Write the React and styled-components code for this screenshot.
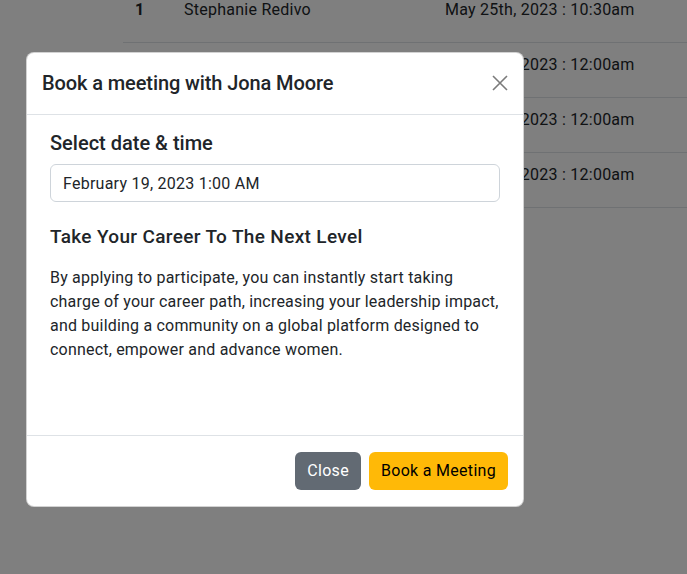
import React from "react";
import styled, { createGlobalStyle } from "styled-components";

const Global = createGlobalStyle`
  html, body { margin: 0; padding: 0; background: #fff; }
  body {
    font-family: Roboto, "Noto Sans", "Liberation Sans", sans-serif;
    color: #212529;
    font-size: 16px;
    line-height: 1.5;
    letter-spacing: 0.25px;
    -webkit-font-smoothing: antialiased;
  }
  * { box-sizing: border-box; }
`;

const Page = styled.div`
  width: 687px;
  height: 574px;
  overflow: hidden;
  position: relative;
`;

const Table = styled.div`
  margin: -12px 0 0 123px;
  display: flex;
  flex-direction: column;
`;

const Row = styled.div`
  display: grid;
  grid-template-columns: 49px 261px 1fr;
  height: 55px;
  border-bottom: 1px solid #dee2e6;
`;

const Cell = styled.div`
  padding: 10px 12px;
  white-space: nowrap;
  font-weight: ${(p) => (p.$bold ? 700 : 400)};
`;

const Backdrop = styled.div`
  position: absolute;
  inset: 0;
  background: rgba(0, 0, 0, 0.5);
  padding: 52px 0 0 26px;
`;

const Modal = styled.div`
  width: 498px;
  background: #fff;
  border: 1px solid rgba(0, 0, 0, 0.175);
  border-radius: 8px;
  display: flex;
  flex-direction: column;
  overflow: hidden;
`;

const Header = styled.div`
  display: flex;
  align-items: center;
  justify-content: space-between;
  padding: 15px 15px 16px 15px;
  border-bottom: 1px solid #dee2e6;
`;

const Title = styled.h5`
  margin: 0;
  font-size: 20px;
  font-weight: 500;
  line-height: 30px;
  letter-spacing: -0.1px;
`;

const CloseX = styled.button`
  border: 0;
  background: transparent;
  padding: 0;
  width: 16px;
  height: 16px;
  display: flex;
  align-items: center;
  justify-content: center;
  cursor: pointer;
`;

const Body = styled.div`
  height: 320px;
  padding: 16px 23px;
  display: flex;
  flex-direction: column;
`;

const Label = styled.div`
  font-size: 20px;
  font-weight: 500;
  line-height: 24px;
  letter-spacing: 0;
  margin-bottom: 9px;
`;

const Input = styled.input`
  display: block;
  width: 100%;
  height: 38px;
  padding: 6px 12px;
  font: inherit;
  font-size: 16px;
  letter-spacing: 0.25px;
  color: #212529;
  border: 1px solid #ced4da;
  border-radius: 6px;
  background: #fff;
  outline: none;
`;

const SubHeading = styled.h5`
  margin: 24px 0 18px;
  font-size: 19px;
  font-weight: 500;
  line-height: 22px;
  letter-spacing: 0.35px;
`;

const Text = styled.p`
  margin: 0;
  font-size: 16px;
  line-height: 24px;
  letter-spacing: 0.2px;
`;

const Footer = styled.div`
  display: flex;
  justify-content: flex-end;
  gap: 8px;
  padding: 16px 15px 16px;
  border-top: 1px solid #dee2e6;
`;

const Button = styled.button`
  font: inherit;
  font-size: 16px;
  line-height: 24px;
  letter-spacing: 0.3px;
  padding: 7px 12px;
  border: 0;
  border-radius: 6px;
  cursor: pointer;
  background: ${(p) => (p.$variant === "warning" ? "#ffb907" : "#626a73")};
  color: ${(p) => (p.$variant === "warning" ? "#000" : "#fff")};
`;

const rows = [
  ["1", "Stephanie Redivo", "May 25th, 2023 : 10:30am"],
  ["", "", "May 26th, 2023 : 12:00am"],
  ["", "", "May 27th, 2023 : 12:00am"],
  ["", "", "May 28th, 2023 : 12:00am"],
];

export default function App() {
  return (
    <>
      <Global />
      <Page>
        <Table>
          {rows.map((r, i) => (
            <Row key={i}>
              <Cell $bold>{r[0]}</Cell>
              <Cell>{r[1]}</Cell>
              <Cell>{r[2]}</Cell>
            </Row>
          ))}
        </Table>
        <Backdrop>
          <Modal>
            <Header>
              <Title>Book a meeting with Jona Moore</Title>
              <CloseX aria-label="Close">
                <svg width="16" height="16" viewBox="0 0 16 16">
                  <path d="M1 1L15 15M15 1L1 15" stroke="#7b7b7b" strokeWidth="1.6" fill="none" />
                </svg>
              </CloseX>
            </Header>
            <Body>
              <Label>Select date &amp; time</Label>
              <Input readOnly value="February 19, 2023 1:00 AM" />
              <SubHeading>Take Your Career To The Next Level</SubHeading>
              <Text>
                By applying to participate, you can instantly start taking
                <br />
                charge of your career path, increasing your leadership impact,
                <br />
                and building a community on a global platform designed to
                <br />
                connect, empower and advance women.
              </Text>
            </Body>
            <Footer>
              <Button>Close</Button>
              <Button $variant="warning">Book a Meeting</Button>
            </Footer>
          </Modal>
        </Backdrop>
      </Page>
    </>
  );
}
